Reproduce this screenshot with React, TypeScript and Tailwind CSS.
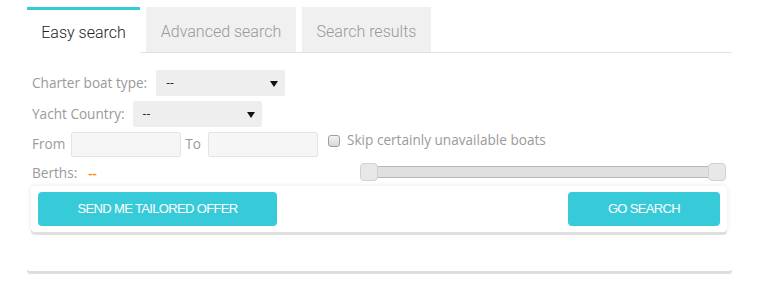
import React from 'react';

const tabs = ['Advanced search', 'Search results'];

function FakeSelect({ width }: { width: string }) {
  return (
    <div className={`${width} h-[26px] bg-[#eeeeee] rounded-[2px] flex items-center justify-between pl-[10px] pr-[7px]`}>
      <span className="text-[12px] text-[#222]">--</span>
      <svg width="8" height="8" viewBox="0 0 8 8" className="mt-[1px]">
        <path d="M0 1h8L4 7z" fill="#111" />
      </svg>
    </div>
  );
}

export default function App() {
  return (
    <div className="w-[757px] h-[289px] bg-white pt-[7px] pl-[27px] font-['Open_Sans',sans-serif]">
      <div className="w-[705px] bg-white shadow-[0_3px_0_#dedede] rounded-b-[3px]">
        {/* Tabs */}
        <div className="flex items-stretch h-[46px] font-['Roboto',sans-serif]">
          <div className="w-[113px] border-t-[3px] border-[#36cbd9] flex items-center justify-center text-[16px] font-light text-[#222] pt-[2px]">
            Easy search
          </div>
          <div className="flex-1 flex gap-[6px] pl-[6px] border-b border-[#e2e2e2]">
            {tabs.map((tab, i) => (
              <div
                key={tab}
                className={`${i === 0 ? 'w-[150px]' : 'w-[129px]'} bg-[#f0f0f0] flex items-center justify-center text-[16px] font-light text-[#999] pt-[5px]`}
              >
                {tab}
              </div>
            ))}
          </div>
        </div>

        {/* Form */}
        <div className="pt-[17px] pl-[5px] text-[13.6px] text-[#9a9a9a]">
          <div className="flex items-center gap-[9px] h-[26px]">
            <span>Charter boat type:</span>
            <FakeSelect width="w-[129px]" />
          </div>
          <div className="flex items-center gap-[8px] h-[26px] mt-[5px]">
            <span>Yacht Country:</span>
            <FakeSelect width="w-[129px]" />
          </div>
          <div className="flex items-center h-[25px] mt-[5px]">
            <span>From</span>
            <div className="ml-[6px] w-[110px] h-[25px] bg-[#f6f6f6] border border-[#e4e4e4] rounded-[2px]" />
            <span className="ml-[4px]">To</span>
            <div className="ml-[7px] w-[110px] h-[25px] bg-[#f6f6f6] border border-[#e4e4e4] rounded-[2px]" />
            <div className="ml-[10px] mb-[8px] w-[12px] h-[12px] rounded-[3px] border border-[#9c9c9c] bg-gradient-to-b from-[#f4f4f4] to-[#d8d8d8]" />
            <span className="ml-[7px] mb-[8px]">Skip certainly unavailable boats</span>
          </div>
          <div className="flex items-center h-[18px] mt-[6px]">
            <span className="mt-[2px]">Berths:</span>
            <span className="ml-[11px] mt-[2px] text-[#ff8a00] font-semibold">--</span>
            <div className="ml-auto mr-[6px] w-[366px] h-[18px] flex items-center">
              <div className="w-[18px] h-[18px] rounded-[4px] bg-[#e8e8e8] border border-[#d0d0d0]" />
              <div className="flex-1 h-[12px] bg-[#e0e0e0] border-y border-[#b8b8b8]" />
              <div className="w-[18px] h-[18px] rounded-[4px] bg-[#e8e8e8] border border-[#d0d0d0]" />
            </div>
          </div>
        </div>

        {/* Action card */}
        <div className="mt-[5px] ml-[4px] w-[696px] bg-white rounded-[4px] shadow-[0_3px_0_#e0e0e0,0_0_5px_rgba(0,0,0,0.1)] px-[7px] pt-[6px] pb-[6px] flex justify-between">
          <button className="w-[239px] h-[34px] bg-[#37cbd9] rounded-[4px] text-white text-[13px] font-['Liberation_Sans',sans-serif] tracking-[-0.05em]">
            SEND ME TAILORED OFFER
          </button>
          <button className="w-[152px] h-[34px] bg-[#37cbd9] rounded-[4px] text-white text-[13px] font-['Liberation_Sans',sans-serif] tracking-[-0.05em]">
            GO SEARCH
          </button>
        </div>
        <div className="h-[39px]" />
      </div>
    </div>
  );
}
